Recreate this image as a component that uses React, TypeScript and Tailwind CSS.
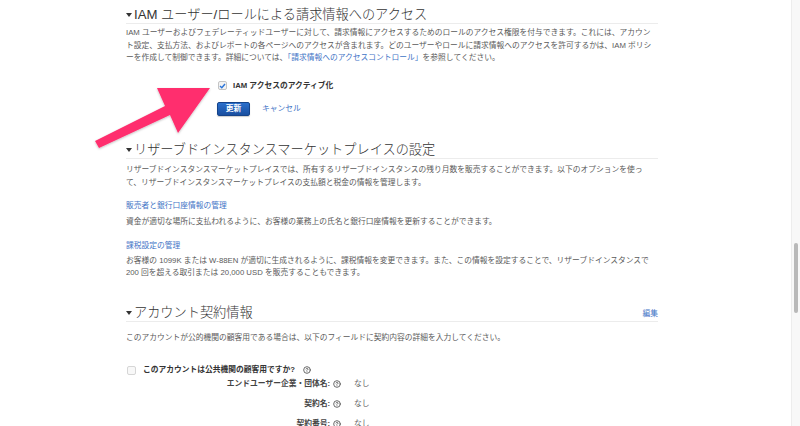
import { CircleHelp } from "lucide-react";

const Caret = () => (
  <svg width="6" height="4" viewBox="0 0 6 4" className="mr-[2px] mt-[1px] shrink-0">
    <path d="M0 0 L6 0 L3 4 Z" fill="#333" />
  </svg>
);

const Help = () => <CircleHelp size={8} strokeWidth={2.6} color="#555" className="shrink-0" />;

const rows = [
  { label: "エンドユーザー企業・団体名:", value: "なし" },
  { label: "契約名:", value: "なし" },
  { label: "契約番号:", value: "なし" },
];

export default function App() {
  return (
    <div className="relative flex h-[426px] w-[800px] overflow-hidden bg-white font-['Liberation_Sans','Noto_Sans_CJK_JP',sans-serif] text-[7.75px] text-[#5a5a5a]">
      <div className="flex-1 pl-[126px]">
        <div className="w-[532px]">
          {/* IAM section */}
          <h2 className="mt-[6px] flex items-center border-b border-[#ececec] text-[13.2px] leading-[17px] font-light text-[#333]">
            <Caret />
            IAM ユーザー/ロールによる請求情報へのアクセス
          </h2>
          <p className="mt-[3px] whitespace-nowrap leading-[12.6px]">
            IAM ユーザーおよびフェデレーティッドユーザーに対して、請求情報にアクセスするためのロールのアクセス権限を付与できます。これには、アカウン
            <br />
            ト設定、支払方法、およびレポートの各ページへのアクセスが含まれます。どのユーザーやロールに請求情報へのアクセスを許可するかは、IAM ポリシ
            <br />
            ーを作成して制御できます。詳細については、
            <span className="text-[#3f74c6]">「請求情報へのアクセスコントロール」</span>
            を参照してください。
          </p>

          <div className="mt-[15px] ml-[92px] flex h-[12px] items-center gap-[6px]">
            <span className="flex h-[9px] w-[9px] items-center justify-center rounded-[2px] border border-[#c4c4c4] bg-[#f3f3f3]">
              <svg width="7" height="6" viewBox="0 0 7 6">
                <path d="M1 3 L2.8 4.8 L6 1" fill="none" stroke="#2a74d8" strokeWidth="1.4" />
              </svg>
            </span>
            <span className="font-bold text-[#333]">IAM アクセスのアクティブ化</span>
          </div>

          <div className="mt-[10px] ml-[91px] flex items-center gap-[12px]">
            <button className="h-[14px] w-[33px] rounded-[2px] border border-[#15438a] bg-gradient-to-b from-[#2a6fcc] to-[#1a4fa0] text-[7.75px] font-bold leading-none text-white shadow-[0_1px_1px_rgba(0,0,0,0.2)]">
              更新
            </button>
            <span className="text-[#3f74c6]">キャンセル</span>
          </div>

          {/* Reserved instance marketplace */}
          <h2 className="mt-[25px] flex items-center border-b border-[#ececec] text-[13.2px] leading-[17px] font-light text-[#333]">
            <Caret />
            リザーブドインスタンスマーケットプレイスの設定
          </h2>
          <p className="mt-[4px] whitespace-nowrap leading-[13px]">
            リザーブドインスタンスマーケットプレイスでは、所有するリザーブドインスタンスの残り月数を販売することができます。以下のオプションを使っ
            <br />
            て、リザーブドインスタンスマーケットプレイスの支払額と税金の情報を管理します。
          </p>
          <p className="mt-[10px] leading-[13px] text-[#3f74c6]">販売者と銀行口座情報の管理</p>
          <p className="mt-[3px] leading-[13px]">
            資金が適切な場所に支払われるように、お客様の業務上の氏名と銀行口座情報を更新することができます。
          </p>
          <p className="mt-[11px] leading-[13px] text-[#3f74c6]">課税設定の管理</p>
          <p className="mt-[3px] whitespace-nowrap leading-[12.7px]">
            お客様の 1099K または W-88EN が適切に生成されるように、課税情報を変更できます。また、この情報を設定することで、リザーブドインスタンスで
            <br />
            200 回を超える取引または 20,000 USD を販売することもできます。
          </p>

          {/* Account contract info */}
          <div className="mt-[24px] flex items-end justify-between border-b border-[#ececec]">
            <h2 className="flex items-center text-[13.2px] leading-[17px] font-light text-[#333]">
              <Caret />
              アカウント契約情報
            </h2>
            <span className="mb-[2px] text-[#3f74c6]">編集</span>
          </div>
          <p className="mt-[9px] leading-[13px]">
            このアカウントが公的機関の顧客用である場合は、以下のフィールドに契約内容の詳細を入力してください。
          </p>

          <div className="mt-[19px] ml-[1px] flex h-[14px] items-center">
            <span className="h-[9px] w-[9px] rounded-[2px] border border-[#d6d6d6] bg-[#f8f8f8]" />
            <span className="ml-[7px] font-bold text-[#333]">このアカウントは公共機関の顧客用ですか?</span>
            <span className="ml-[8px]">
              <Help />
            </span>
          </div>

          <div className="flex flex-col gap-[6px]">
            {rows.map((r) => (
              <div key={r.label} className="flex h-[14px] items-center">
                <span className="w-[204px] text-right font-bold text-[#444]">{r.label}</span>
                <span className="ml-[3px]">
                  <Help />
                </span>
                <span className="ml-[13px] text-[#666]">{r.value}</span>
              </div>
            ))}
          </div>
        </div>
      </div>

      {/* browser scrollbar */}
      <div className="w-[9px] border-l border-[#ededed] bg-[#f8f8f8]">
        <div className="mt-[243px] ml-[2px] h-[70px] w-[4px] rounded-full bg-[#b9b9b9]" />
      </div>

      {/* pink annotation arrow */}
      <svg
        className="pointer-events-none absolute left-0 top-0"
        width="260"
        height="170"
        viewBox="0 0 260 170"
      >
        <defs>
          <filter id="sh" x="-20%" y="-20%" width="140%" height="140%">
            <feDropShadow dx="0" dy="1" stdDeviation="1.2" floodColor="#000" floodOpacity="0.25" />
          </filter>
        </defs>
        <polygon
          points="95,141 165,106 157,88 210,88 178,133 170,115 99,148"
          fill="#ff2e6e"
          strokeLinejoin="round"
          filter="url(#sh)"
        />
      </svg>
    </div>
  );
}
